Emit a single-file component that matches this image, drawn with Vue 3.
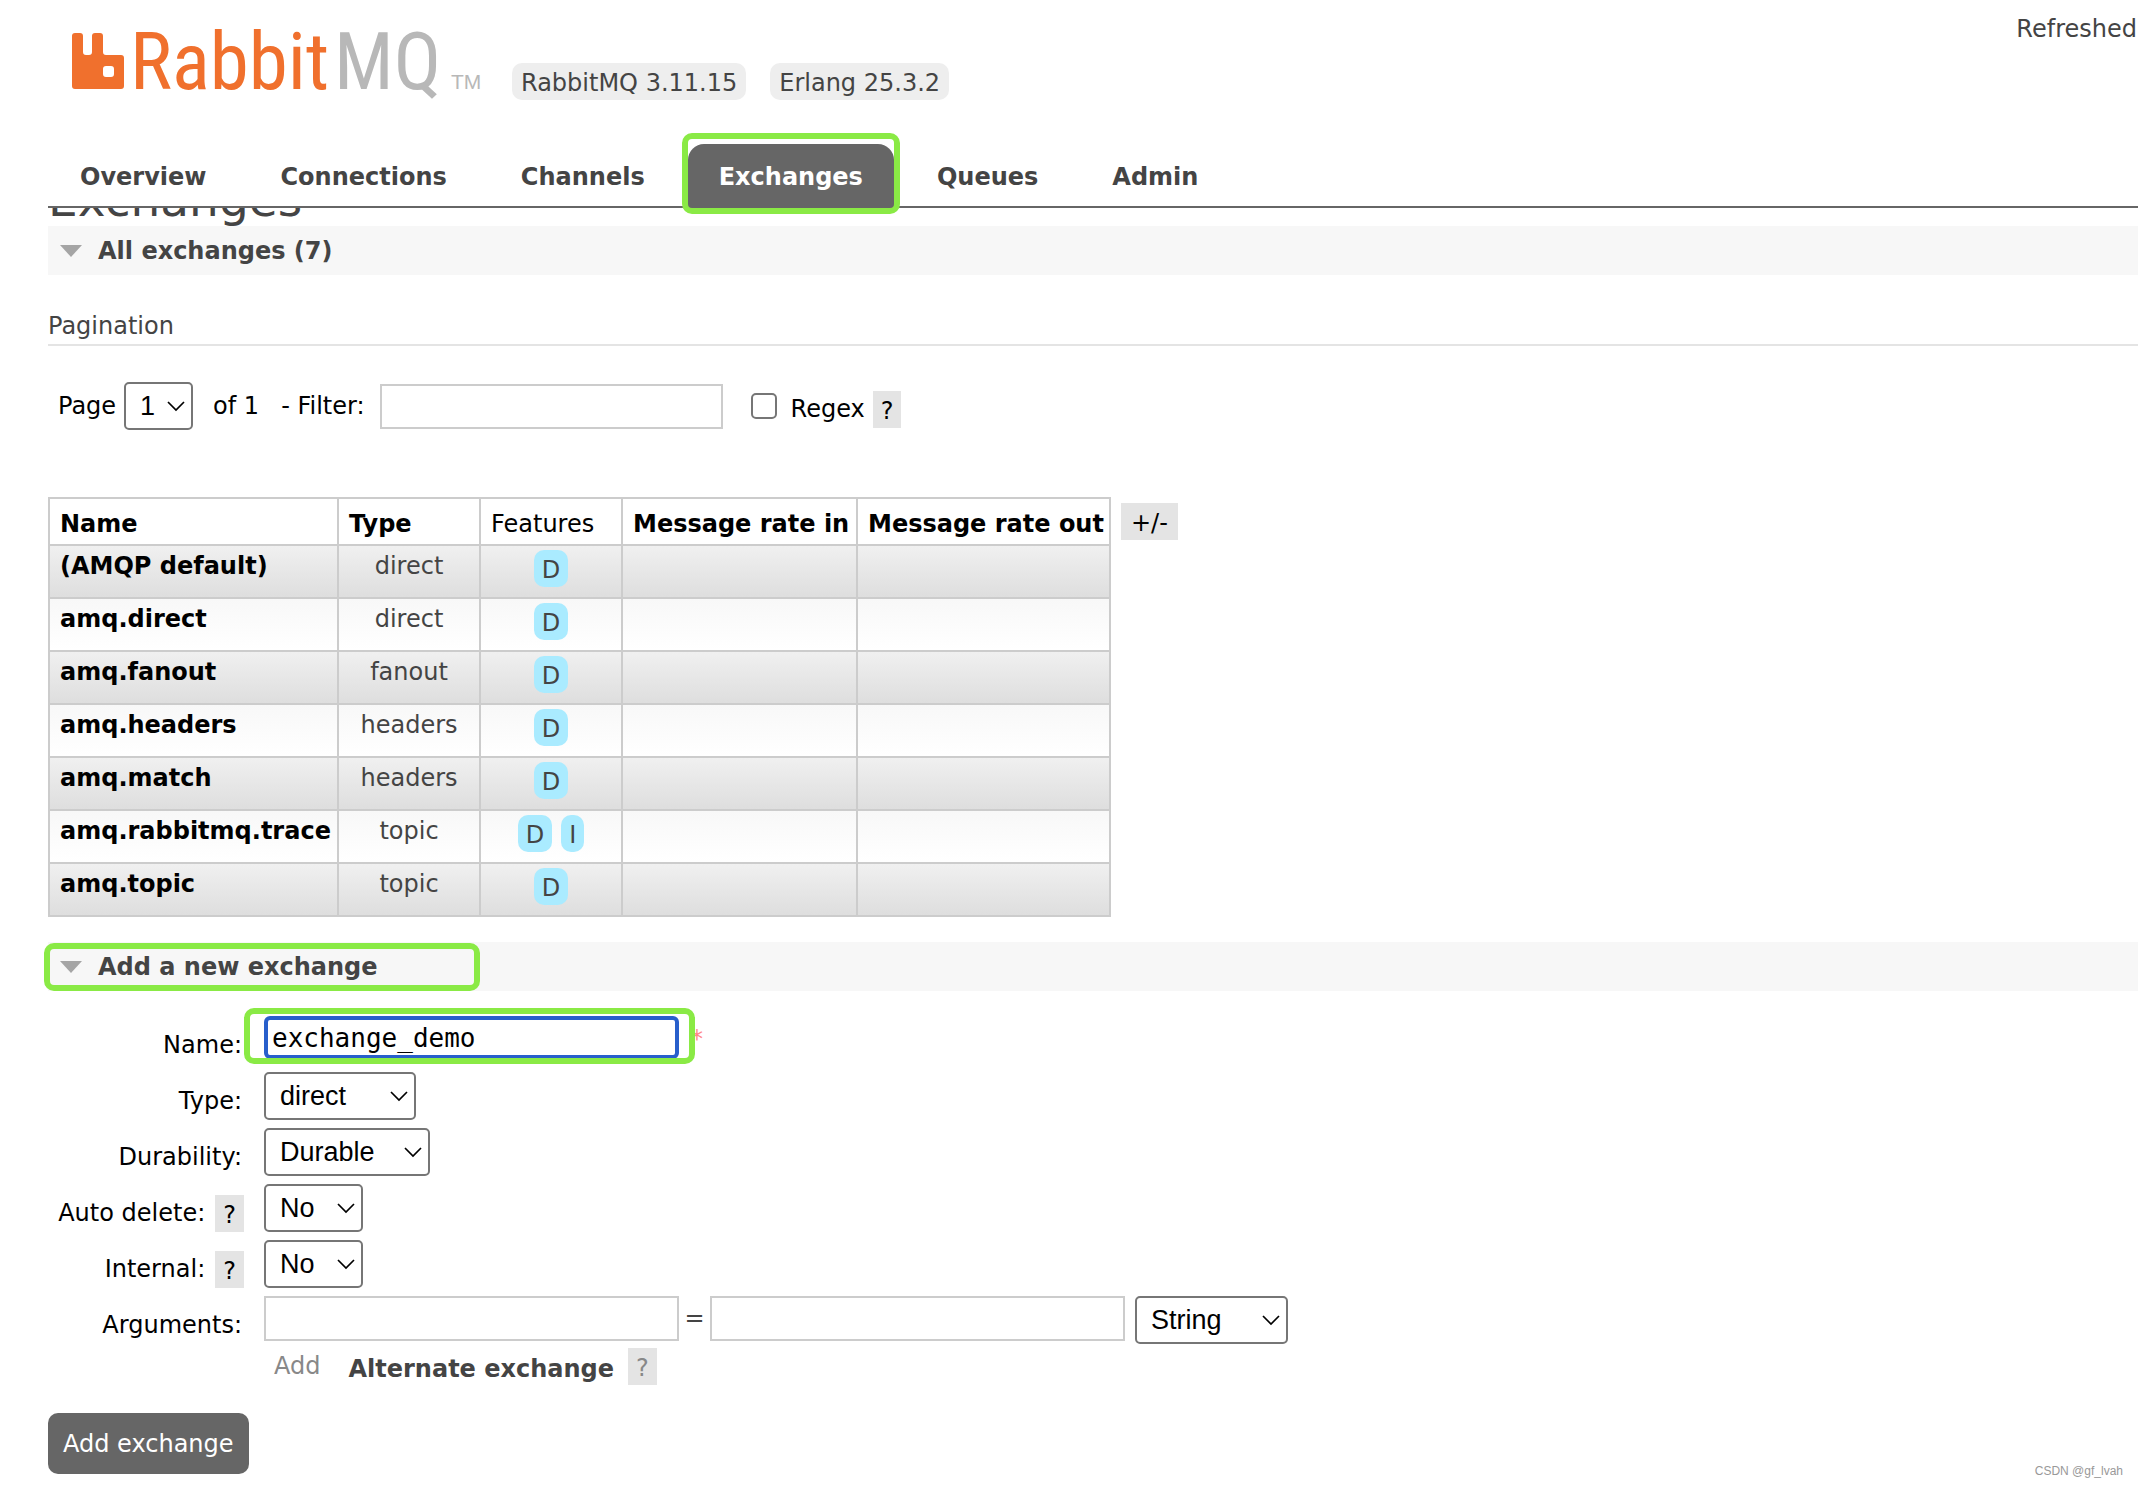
<script setup>
import { ref } from 'vue'

const tabs = ['Overview', 'Connections', 'Channels', 'Exchanges', 'Queues', 'Admin']
const activeTab = 'Exchanges'

const exchanges = [
  { name: '(AMQP default)', type: 'direct', features: ['D'] },
  { name: 'amq.direct', type: 'direct', features: ['D'] },
  { name: 'amq.fanout', type: 'fanout', features: ['D'] },
  { name: 'amq.headers', type: 'headers', features: ['D'] },
  { name: 'amq.match', type: 'headers', features: ['D'] },
  { name: 'amq.rabbitmq.trace', type: 'topic', features: ['D', 'I'] },
  { name: 'amq.topic', type: 'topic', features: ['D'] },
]

const choices = [
  { id: 'type', label: 'Type', options: ['direct', 'fanout', 'headers', 'topic'], size: 'w-type' },
  { id: 'durability', label: 'Durability', options: ['Durable', 'Transient'], size: 'w-durability' },
  { id: 'auto-delete', label: 'Auto delete', options: ['No', 'Yes'], size: 'w-flag', help: true },
  { id: 'internal', label: 'Internal', options: ['No', 'Yes'], size: 'w-flag', help: true },
]

const name = ref('exchange_demo')
</script>

<template>
  <div class="page">
    <header>
      <div class="brand">
        <svg class="logo" width="412" height="64" viewBox="0 0 412 64" role="img" aria-label="RabbitMQ">
          <path
            fill="#f0702d"
            fill-rule="evenodd"
            d="M3 1h5q3 0 3 3v16q0 3 3 3h3q3 0 3-3V4q0-3 3-3h5q3 0 3 3v16q0 3 3 3h15q3 0 3 3v28q0 3-3 3H3q-3 0-3-3V4q0-3 3-3zM34 34q-3 0-3 3v5q0 3 3 3h5q3 0 3-3v-5q0-3-3-3z"
          />
          <text class="word" x="58" y="57" fill="#f0702d">Rabbit</text>
          <text class="word" x="262" y="57" fill="#b8b8b8">MQ</text>
          <text class="tm" x="379" y="57" fill="#b8b8b8">TM</text>
        </svg>
        <span class="version">RabbitMQ 3.11.15</span>
        <span class="version">Erlang 25.3.2</span>
        <span class="refreshed">Refreshed</span>
      </div>
      <nav>
        <ul class="tabs">
          <li v-for="tab in tabs" :key="tab" :class="{ marked: tab === activeTab }">
            <a href="#" :class="{ active: tab === activeTab }">{{ tab }}</a>
          </li>
        </ul>
      </nav>
    </header>

    <main>
      <div class="title"><h1>Exchanges</h1></div>

      <section>
        <h2 class="bar">
          <svg width="22" height="12" viewBox="0 0 22 12"><path fill="#a5a5a5" d="M0 0h22L11 12z" /></svg>
          All exchanges (7)
        </h2>

        <h3>Pagination</h3>
        <div class="filter">
          <label for="page">Page</label>
          <span class="select w-page">
            <select id="page"><option>1</option></select>
            <svg width="18" height="11" viewBox="0 0 18 11"><path d="M1 1l8 8 8-8" /></svg>
          </span>
          <span class="of">of 1</span>
          <label for="filter" class="filter-label">- Filter:</label>
          <input id="filter" type="text" class="box filter-box" />
          <input id="regex" type="checkbox" />
          <label for="regex" class="low">Regex</label>
          <button type="button" class="help low">?</button>
        </div>

        <div class="listing">
          <table>
            <colgroup>
              <col class="c-name" />
              <col class="c-type" />
              <col class="c-type" />
              <col class="c-in" />
              <col class="c-out" />
            </colgroup>
            <thead>
              <tr>
                <th>Name</th>
                <th>Type</th>
                <th class="plain">Features</th>
                <th>Message rate in</th>
                <th>Message rate out</th>
              </tr>
            </thead>
            <tbody>
              <tr v-for="x in exchanges" :key="x.name">
                <td><a href="#">{{ x.name }}</a></td>
                <td class="center">{{ x.type }}</td>
                <td>
                  <div class="features">
                    <abbr v-for="f in x.features" :key="f">{{ f }}</abbr>
                  </div>
                </td>
                <td></td>
                <td></td>
              </tr>
            </tbody>
          </table>
          <button type="button" class="help">+/-</button>
        </div>
      </section>

      <section class="add">
        <h2 class="bar marked">
          <svg width="22" height="12" viewBox="0 0 22 12"><path fill="#a5a5a5" d="M0 0h22L11 12z" /></svg>
          Add a new exchange
        </h2>

        <form @submit.prevent>
          <div class="row">
            <div class="label"><label for="name">Name:</label></div>
            <div class="field">
              <span class="name-wrap marked"><input id="name" v-model="name" type="text" class="name" /></span>
              <span class="star">*</span>
            </div>
          </div>

          <div v-for="c in choices" :key="c.id" class="row">
            <div class="label">
              <label :for="c.id">{{ c.label }}:</label>
              <button v-if="c.help" type="button" class="help">?</button>
            </div>
            <div class="field">
              <span class="select" :class="c.size">
                <select :id="c.id"><option v-for="o in c.options" :key="o">{{ o }}</option></select>
                <svg width="18" height="11" viewBox="0 0 18 11"><path d="M1 1l8 8 8-8" /></svg>
              </span>
            </div>
          </div>

          <div class="row last">
            <div class="label"><label for="arg-key">Arguments:</label></div>
            <div class="field">
              <input id="arg-key" type="text" class="box" />
              <span class="equals">=</span>
              <input type="text" class="box" aria-label="Argument value" />
              <span class="select w-string">
                <select aria-label="Argument type"><option>String</option></select>
                <svg width="18" height="11" viewBox="0 0 18 11"><path d="M1 1l8 8 8-8" /></svg>
              </span>
            </div>
          </div>

          <div class="shortcuts">
            <span>Add</span>
            <a href="#">Alternate exchange</a>
            <button type="button" class="help">?</button>
          </div>

          <button type="submit" class="submit">Add exchange</button>
        </form>
      </section>
    </main>

    <span class="watermark">CSDN @gf_lvah</span>
  </div>
</template>

<style>
body {
  margin: 0;
  background: #fff;
}
</style>

<style scoped>
.page {
  position: relative;
  box-sizing: border-box;
  min-height: 100vh;
  padding-left: 48px;
  padding-bottom: 12px;
  overflow: hidden;
  color: #444;
  font: 24px/36px "DejaVu Sans", Verdana, sans-serif;
}

.page *,
.page *::after {
  box-sizing: border-box;
}

a {
  color: inherit;
  font-weight: bold;
  text-decoration: none;
}

button,
input,
select {
  margin: 0;
  font: inherit;
}

h1,
h2,
h3,
ul {
  margin: 0;
  padding: 0;
}

/* hand-drawn highlight frames */
.marked {
  position: relative;
}

.marked::after {
  content: "";
  position: absolute;
  border: 6px solid #8aea45;
  border-radius: 10px;
  pointer-events: none;
}

/* header */
header {
  border-bottom: 2px solid #666;
}

.brand {
  display: flex;
  align-items: flex-start;
  height: 144px;
  padding-left: 24px;
}

.logo {
  flex: none;
  margin-top: 32px;
  margin-right: 28px;
  overflow: visible;
}

.word {
  font: 79px "Roboto Condensed", "Liberation Sans Narrow", sans-serif;
}

.tm {
  font: 21px "Liberation Sans", Arial, sans-serif;
}

.version {
  margin-top: 63px;
  margin-right: 24px;
  padding: 3px 9px 0;
  border-radius: 10px;
  background: #eee;
  line-height: 34px;
  white-space: nowrap;
}

.refreshed {
  margin-top: 11px;
  margin-left: auto;
  padding-right: 1px;
}

.tabs {
  display: flex;
  gap: 12px;
  height: 62px;
  padding-left: 1px;
  list-style: none;
}

.tabs a {
  display: block;
  height: 64px;
  padding: 15px 31px 0;
  border-radius: 16px 16px 0 0;
}

.tabs .active {
  background: #666;
  color: #fff;
}

.tabs .marked::after {
  inset: -11px -6px -8px;
}

/* the heading is scrolled half under the header */
.title {
  display: flex;
  align-items: flex-end;
  height: 18px;
  overflow: hidden;
}

h1 {
  font-weight: normal;
  font-size: 47px;
  line-height: 53px;
}

.bar {
  display: flex;
  align-items: center;
  gap: 16px;
  height: 49px;
  padding-left: 12px;
  background: #f7f7f7;
  font-size: 24px;
  line-height: 36px;
}

.bar.marked::after {
  inset: 1px auto 0 -4px;
  width: 436px;
}

h3 {
  margin-top: 34px;
  border-bottom: 2px solid #e4e4e4;
  font-weight: normal;
  font-size: 24px;
  line-height: 35px;
}

/* controls */
.help {
  flex: none;
  height: 37px;
  padding: 3px 8px 0;
  border: 0;
  background: #e4e4e4;
  color: #000;
  line-height: 34px;
}

.box {
  width: 415px;
  height: 45px;
  border: 2px solid #ccc;
  background: #fff;
}

.select {
  display: inline-grid;
  align-items: center;
  height: 48px;
}

.select select,
.select svg {
  grid-area: 1 / 1;
}

.select svg {
  justify-self: end;
  margin-right: 8px;
  pointer-events: none;
  fill: none;
  stroke: #000;
  stroke-width: 1.7;
}

select {
  width: 100%;
  height: 100%;
  padding: 0 14px;
  border: 2px solid #767676;
  border-radius: 5px;
  background: #fff;
  color: #000;
  font: 27px "Liberation Sans", Arial, sans-serif;
  appearance: none;
}

.w-page { width: 69px; }
.w-type { width: 152px; }
.w-durability { width: 166px; }
.w-flag { width: 99px; }
.w-string { width: 153px; margin-left: 10px; }

.filter {
  display: flex;
  align-items: center;
  margin-top: 36px;
  padding-left: 10px;
  color: #000;
}

.filter .w-page {
  margin-left: 8px;
}

.of {
  margin-left: 20px;
}

.filter-label {
  margin-left: 22px;
}

.filter-box {
  width: 343px;
  margin-left: 15px;
}

input[type="checkbox"] {
  width: 26px;
  height: 26px;
  margin-left: 28px;
  border: 2px solid #767676;
  border-radius: 5px;
  appearance: none;
}

.low {
  margin-top: 6px;
}

label.low {
  margin-left: 14px;
}

.help.low {
  margin-left: 8px;
}

/* exchange table */
.listing {
  display: flex;
  align-items: flex-start;
  gap: 10px;
  margin-top: 67px;
}

.listing .help {
  margin-top: 6px;
  padding: 3px 10px 0;
}

table {
  width: 1063px;
  border-collapse: collapse;
  table-layout: fixed;
}

.c-name { width: 289px; }
.c-type { width: 142px; }
.c-in { width: 235px; }

th,
td {
  padding: 0 10px;
  border: 2px solid #ccc;
  white-space: nowrap;
}

th {
  height: 47px;
  padding-top: 4px;
  color: #000;
  text-align: left;
}

.plain {
  font-weight: normal;
}

td {
  height: 53px;
  padding-top: 2px;
  vertical-align: top;
}

td a {
  color: #000;
}

.center {
  text-align: center;
}

tbody tr:nth-child(odd) td {
  background: linear-gradient(#f0f0f0, #dedede);
}

tbody tr:nth-child(even) td {
  background: linear-gradient(#f8f8f8, #fff);
}

.features {
  display: flex;
  justify-content: center;
  gap: 9px;
  padding-top: 2px;
}

abbr {
  padding: 3px 8px 0;
  border-radius: 10px;
  background: #aaebff;
  line-height: 34px;
}

/* add form */
.add {
  margin-top: 25px;
}

form {
  padding-top: 25px;
}

.row {
  display: flex;
  gap: 20px;
  height: 56px;
}

.last {
  height: 52px;
}

.label {
  display: flex;
  justify-content: flex-end;
  gap: 8px;
  width: 196px;
  padding-top: 11px;
  color: #000;
}

.label label {
  margin-right: 2px;
}

.field {
  display: flex;
  align-items: flex-start;
}

.name-wrap {
  display: flex;
}

.name-wrap::after {
  z-index: 1;
  inset: -8px -16px -5px -20px;
}

.name {
  width: 415px;
  height: 43px;
  padding: 0 4px;
  border: 4px solid #285fcb;
  border-radius: 6px;
  outline: none;
  color: #000;
  font: 26px "DejaVu Sans Mono", monospace;
}

.star {
  margin-left: 12px;
  padding-top: 5px;
  color: #f88;
}

.equals {
  width: 31px;
  padding-top: 4px;
  text-align: center;
}

.shortcuts {
  display: flex;
  align-items: flex-start;
  padding-left: 226px;
  color: #888;
}

.shortcuts a {
  margin: 3px 14px 0 28px;
  color: #444;
}

.shortcuts .help {
  color: #888;
}

.submit {
  display: block;
  height: 61px;
  margin-top: 26px;
  padding: 1px 15px 0;
  border: 0;
  border-radius: 10px;
  background: #666;
  color: #fff;
}

.watermark {
  position: absolute;
  right: 15px;
  bottom: 9px;
  color: #999;
  font: 12px/16px "Liberation Sans", Arial, sans-serif;
}
</style>
